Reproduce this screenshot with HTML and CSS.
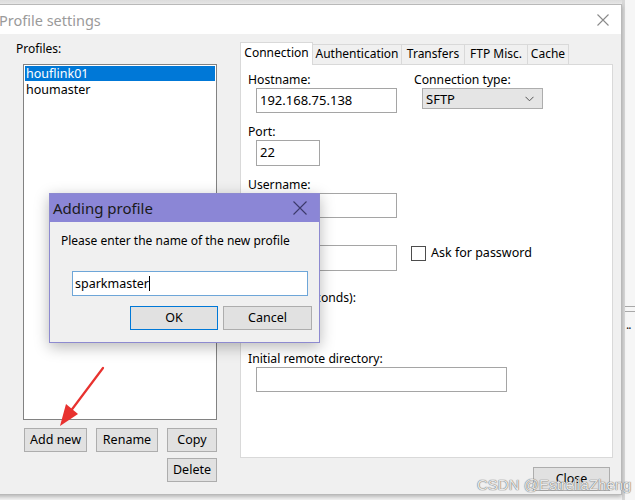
FILE: index.html
```html
<!DOCTYPE html>
<html>
<head>
<meta charset="utf-8">
<link rel="stylesheet" href="styles.css">
</head>
<body>
<div class="desktop">
  <div class="behind">
    <div class="behind-line l1"></div>
    <div class="behind-line l2"></div>
    <div class="behind-dots">..</div>
  </div>

  <div class="window">
    <div class="titlebar">
      <span class="title">Profile settings</span>
      <svg class="win-close" width="12" height="12" viewBox="0 0 12 12"><path d="M0.5 0.5 L11.5 11.5 M11.5 0.5 L0.5 11.5" stroke="#8a8a8a" stroke-width="1.1" fill="none"/></svg>
    </div>
    <div class="win-body">
      <div class="left-col">
        <div class="label">Profiles:</div>
        <div class="listbox">
          <div class="item selected">houflink01</div>
          <div class="item">houmaster</div>
        </div>
        <div class="btn-row">
          <button class="btn w-add">Add new</button>
          <button class="btn w-rename">Rename</button>
          <button class="btn w-copy">Copy</button>
        </div>
        <div class="btn-row end">
          <button class="btn w-copy">Delete</button>
        </div>
      </div>
      <div class="right-col">
        <div class="tabs">
          <div class="tab active t-conn">Connection</div>
          <div class="tab t-auth">Authentication</div>
          <div class="tab t-trans">Transfers</div>
          <div class="tab t-ftp">FTP Misc.</div>
          <div class="tab t-cache">Cache</div>
        </div>
        <div class="panel">
          <div class="row first">
            <div class="field">
              <div class="label">Hostname:</div>
              <div class="input w-host">192.168.75.138</div>
            </div>
            <div class="field type-field">
              <div class="label">Connection type:</div>
              <div class="select">
                <span>SFTP</span>
                <svg width="9" height="6" viewBox="0 0 9 6"><path d="M0.5 0.8 L4.5 4.8 L8.5 0.8" stroke="#555" stroke-width="1" fill="none"/></svg>
              </div>
            </div>
          </div>
          <div class="row">
            <div class="field">
              <div class="label">Port:</div>
              <div class="input w-port tall">22</div>
            </div>
          </div>
          <div class="row">
            <div class="field">
              <div class="label">Username:</div>
              <div class="input w-host"></div>
            </div>
          </div>
          <div class="row">
            <div class="field">
              <div class="label">Password:</div>
              <div class="input w-host tall"></div>
            </div>
            <label class="check"><span class="box"></span>Ask for password</label>
          </div>
          <div class="row gap-lg">
            <div class="field">
              <div class="label">Timeout (seconds):</div>
              <div class="input w-port"></div>
            </div>
          </div>
          <div class="row gap-lg2">
            <div class="field">
              <div class="label">Initial remote directory:</div>
              <div class="input w-dir"></div>
            </div>
          </div>
        </div>
        <div class="footer">
          <button class="btn w-close">Close</button>
        </div>
      </div>
    </div>
  </div>

  <svg class="arrow" width="60" height="70" viewBox="0 0 60 70">
    <path d="M47 4 L14 48" stroke="#e8322f" stroke-width="2.2" fill="none" stroke-linecap="round"/>
    <polygon points="4,62 10,40 22,50" fill="#e8322f"/>
  </svg>

  <div class="dialog">
    <div class="dlg-title">
      <span>Adding profile</span>
      <svg width="14" height="14" viewBox="0 0 14 14"><path d="M0.5 0.5 L13.5 13.5 M13.5 0.5 L0.5 13.5" stroke="#3c3a6a" stroke-width="1.1" fill="none"/></svg>
    </div>
    <div class="dlg-body">
      <div class="dlg-text">Please enter the name of the new profile</div>
      <div class="dlg-input">sparkmaster<span class="caret"></span></div>
      <div class="dlg-buttons">
        <button class="btn default w-ok">OK</button>
        <button class="btn w-cancel">Cancel</button>
      </div>
    </div>
  </div>

  <div class="watermark">CSDN @EstrellaZheng</div>
</div>
</body>
</html>
```

FILE: styles.css
```css
* { box-sizing: border-box; }
html, body { margin: 0; padding: 0; }
body {
  width: 635px;
  height: 500px;
  overflow: hidden;
  background: #f4f4f4;
  font-family: "Noto Sans", "Open Sans", sans-serif;
  font-size: 12px;
  color: #000;
}
.desktop {
  position: relative;
  width: 635px;
  height: 500px;
  background: linear-gradient(#dcdcdc, #e6e6e6 3px, #f4f4f4 4px);
}
.behind {
  position: absolute;
  left: 622px;
  top: 0;
  width: 13px;
  height: 500px;
  background: #f6f6f6;
  border-left: 3px solid #d8d8d8;
}
.behind-line { position: absolute; left: 0; right: 0; height: 1px; background: #a9a9a9; }
.behind-line.l1 { top: 306px; }
.behind-line.l2 { top: 311px; }
.behind-dots { position: absolute; left: 1px; top: 318px; font-size: 12px; line-height: 14px; color: #222; letter-spacing: -1px; }

.window {
  position: absolute;
  left: -10px;
  top: 4px;
  width: 632px;
  height: 491px;
  background: #f0f0f0;
  border: 1px solid #b9b9b9;
  box-shadow: 0 2px 4px rgba(0,0,0,0.25);
  display: flex;
  flex-direction: column;
}
.titlebar {
  height: 29px;
  background: #fff;
  display: flex;
  align-items: center;
  justify-content: space-between;
  padding: 0 12px 0 8px;
  flex: none;
}
.title { font-size: 14.5px; color: #9a9a9a; }

.win-body {
  display: flex;
  padding: 7px 0 0 25px;
  flex: 1;
}
.label { line-height: 16px; white-space: nowrap; }

.left-col {
  width: 201px;
  display: flex;
  flex-direction: column;
}
.listbox {
  margin: 7px 0 0 7px;
  width: 194px;
  height: 356px;
  background: #fff;
  border: 1px solid #828282;
  padding: 1px;
}
.item { height: 15px; line-height: 15px; margin-bottom: 1px; padding-left: 1px; font-size: 12.5px; }
.item.selected { background: #0078d7; color: #fff; }

.btn-row {
  display: flex;
  gap: 9px;
  margin: 8px 0 0 8px;
}
.btn-row.end { justify-content: flex-end; margin-top: 6px; }
.btn {
  height: 24px;
  background: #e1e1e1;
  border: 1px solid #adadad;
  font-family: inherit;
  font-size: 12.5px;
  color: #000;
  padding: 0;
  line-height: 20px;
}
.w-add { width: 63px; }
.w-rename { width: 62px; }
.w-copy { width: 50px; }

.right-col {
  margin-left: 23px;
  width: 373px;
  display: flex;
  flex-direction: column;
}
.tabs {
  display: flex;
  align-items: flex-end;
  height: 22px;
  position: relative;
  z-index: 1;
  margin-top: 1px;
}
.tab {
  height: 20px;
  border: 1px solid #d9d9d9;
  border-bottom: none;
  background: #f0f0f0;
  line-height: 18px;
  text-align: center;
  white-space: nowrap;
  margin-left: -1px;
  font-size: 12px;
}
.tab.active {
  height: 23px;
  background: #fff;
  margin-bottom: -1px;
  margin-left: 0;
  line-height: 19px;
}
.t-conn { width: 73px; }
.t-auth { width: 90px; }
.t-trans { width: 64px; }
.t-ftp { width: 64px; }
.t-cache { width: 42px; }

.panel {
  height: 394px;
  background: #fff;
  border: 1px solid #d9d9d9;
  padding: 7px 0 0 7px;
  display: flex;
  flex-direction: column;
  font-size: 12.2px;
}
.row { display: flex; align-items: flex-start; margin-top: 11px; }
.row.first { margin-top: 0; }
.row.gap-lg { margin-top: 19px; }
.row.gap-lg2 { margin-top: 20px; }
.field { display: flex; flex-direction: column; }
.input {
  margin-left: 8px;
  height: 25px;
  border: 1px solid #a5a5a5;
  background: #fff;
  padding: 3px 3px;
  line-height: 17px;
  font-size: 13px;
}
.input.tall { height: 26px; }
.w-host { width: 141px; }
.w-port { width: 64px; }
.w-dir { width: 251px; }
.type-field { margin-left: 17px; }
.select {
  margin-left: 8px;
  width: 121px;
  height: 21px;
  background: #e5e5e5;
  border: 1px solid #adadad;
  display: flex;
  align-items: center;
  justify-content: space-between;
  padding: 0 8px 0 3px;
  font-size: 13px;
}
.check {
  display: flex;
  align-items: center;
  margin: 16px 0 0 14px;
  gap: 5px;
  line-height: 16px;
  font-size: 12.5px;
}
.box {
  width: 15px;
  height: 15px;
  border: 1px solid #4d4d4d;
  background: #fff;
}

.footer {
  display: flex;
  justify-content: flex-end;
  margin-top: 9px;
  padding-right: 3px;
}
.w-close { width: 77px; }

.arrow {
  position: absolute;
  left: 56px;
  top: 364px;
}

.dialog {
  position: absolute;
  left: 49px;
  top: 193px;
  width: 271px;
  height: 150px;
  background: #f0f0f0;
  border: 1px solid #8d8ad0;
  box-shadow: 0 4px 14px rgba(0,0,0,0.28);
}
.dlg-title {
  height: 28px;
  background: #8b86d6;
  display: flex;
  align-items: center;
  justify-content: space-between;
  padding: 0 12px 0 3px;
  font-size: 15px;
  color: #1a1a1a;
}
.dlg-body { padding: 10px 0 0 11px; }
.dlg-text { line-height: 18px; }
.dlg-input {
  margin: 21px 0 0 11px;
  width: 236px;
  height: 25px;
  border: 1px solid #6ea6d8;
  background: #fff;
  padding: 3px 2px;
  line-height: 17px;
  display: flex;
  align-items: center;
  font-size: 12.5px;
}
.caret { width: 1px; height: 15px; background: #000; margin-left: 0; }
.dlg-buttons {
  display: flex;
  gap: 5px;
  margin: 10px 0 0 69px;
}
.btn.default { border: 1px solid #0078d7; }
.w-ok { width: 88px; }
.w-cancel { width: 89px; }

.watermark {
  position: absolute;
  left: 477px;
  top: 476px;
  font-family: "Liberation Sans", Arial, sans-serif;
  font-size: 15px;
  line-height: 18px;
  color: rgba(255,255,255,0.85);
  text-shadow: 0 0 1px #6a6a6a, 0 0 1px #6a6a6a;
  white-space: nowrap;
}
```
